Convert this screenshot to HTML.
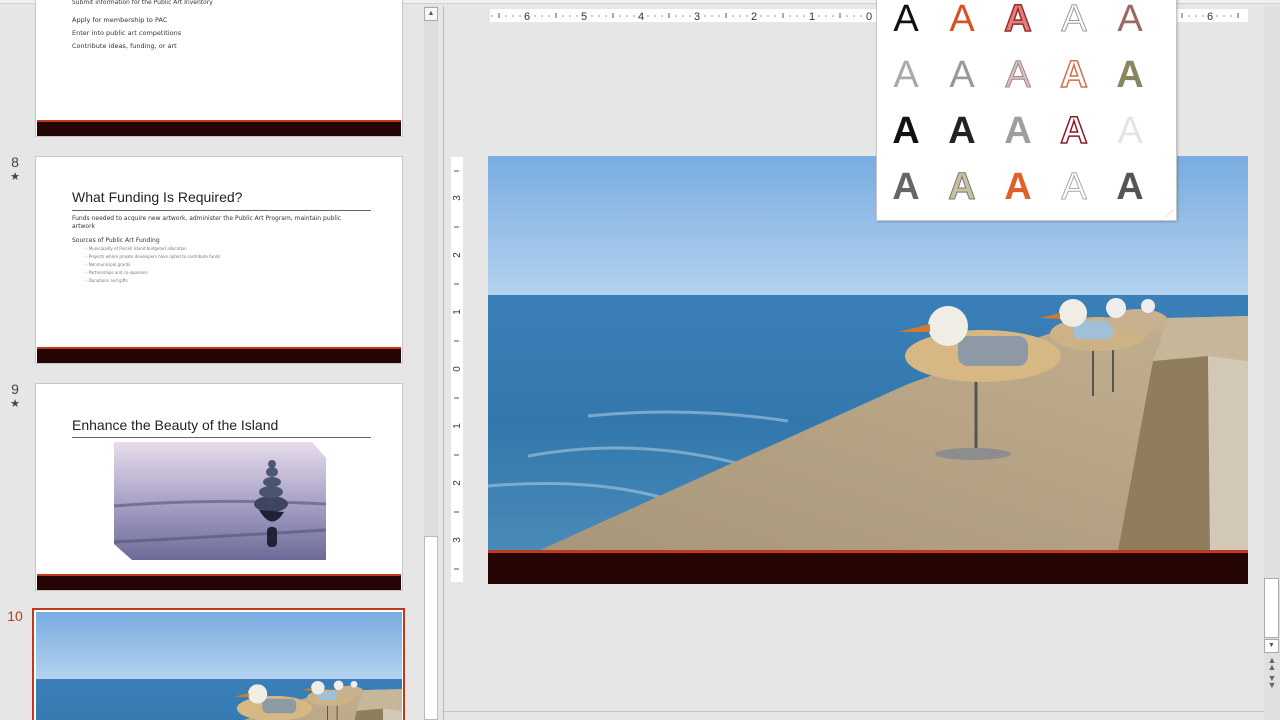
<!DOCTYPE html>
<html><head><meta charset="utf-8"><style>
*{margin:0;padding:0;box-sizing:border-box}
html,body{width:1280px;height:720px;overflow:hidden}
body{background:#e6e6e6;font-family:"Liberation Sans",sans-serif;position:relative}
.abs{position:absolute}
.slide{position:absolute;left:35px;width:368px;background:#fff;border:1px solid #c8c8c8;overflow:hidden}
.bar{position:absolute;left:1px;right:1px;height:16px;background:#250404;border-top:2px solid #c0391b}
.num{position:absolute;left:0;width:30px;text-align:center;font-size:14px;color:#444}
.t{position:absolute;font-family:"DejaVu Sans","Liberation Sans",sans-serif;color:#333}
.ga{position:absolute;width:40px;text-align:center;font-size:38px;font-family:"Liberation Sans",sans-serif;line-height:40px}
</style></head><body>
<div class="abs" style="left:0;top:0;width:1280px;height:4px;background:#f0f0f0;border-bottom:1px solid #d0d0d0"></div>

<div class="slide" style="top:-2px;height:139px">
 <div class="t" style="left:36px;top:0;font-size:6px">Submit information for the Public Art Inventory</div>
 <div class="t" style="left:36px;top:17px;font-size:6.5px">Apply for membership to PAC</div>
 <div class="t" style="left:36px;top:30px;font-size:6.5px">Enter into public art competitions</div>
 <div class="t" style="left:36px;top:43px;font-size:6.5px">Contribute ideas, funding, or art</div>
 <div class="bar" style="top:121px"></div>
</div>

<div class="num" style="top:154px">8</div><div class="num" style="top:170px;font-size:11px">★</div>
<div class="slide" style="top:156px;height:208px">
 <div class="t" style="left:36px;top:32px;font-size:14px;color:#222;font-family:'Liberation Sans',sans-serif">What Funding Is Required?</div>
 <div class="abs" style="left:36px;top:53px;width:299px;height:1px;background:#666"></div>
 <div class="t" style="left:36px;top:58px;font-size:6px;line-height:8px;width:290px">Funds needed to acquire new artwork, administer the Public Art Program, maintain public artwork</div>
 <div class="t" style="left:36px;top:80px;font-size:6px">Sources of Public Art Funding</div>
 <div class="t" style="left:50px;top:88px;font-size:4px;line-height:8px;color:#777">- Municipality of Parcell Island budgeted allocation<br>- Projects where private developers have opted to contribute funds<br>- Nonmunicipal grants<br>- Partnerships and co-sponsors<br>- Donations and gifts</div>
 <div class="bar" style="top:190px"></div>
</div>

<div class="num" style="top:381px">9</div><div class="num" style="top:397px;font-size:11px">★</div>
<div class="slide" style="top:383px;height:208px">
 <div class="t" style="left:36px;top:33px;font-size:14px;color:#222;font-family:'Liberation Sans',sans-serif">Enhance the Beauty of the Island</div>
 <div class="abs" style="left:36px;top:53px;width:299px;height:1px;background:#666"></div>
 <svg class="abs" style="left:78px;top:58px" width="212" height="118" viewBox="0 0 212 118">
  <defs><linearGradient id="st" x1="0" y1="0" x2="0" y2="1"><stop offset="0" stop-color="#e8dcea"/><stop offset=".5" stop-color="#a9a3c8"/><stop offset="1" stop-color="#6c6a96"/></linearGradient></defs>
  <polygon points="0,0 198,0 212,16 212,118 18,118 0,102" fill="url(#st)"/>
  <path d="M0,64 Q100,56 212,62" stroke="#55557a" stroke-width="3" fill="none" opacity=".6"/>
  <path d="M0,100 Q100,95 212,88" stroke="#4a4a70" stroke-width="3" fill="none" opacity=".5"/>
  <ellipse cx="157" cy="62" rx="17" ry="8" fill="#3d4560"/>
  <ellipse cx="157" cy="50" rx="12" ry="6" fill="#4a5470"/>
  <ellipse cx="158" cy="40" rx="9" ry="5" fill="#4a5470"/>
  <ellipse cx="158" cy="30" rx="6" ry="5" fill="#4e5874"/>
  <ellipse cx="158" cy="22" rx="4" ry="4" fill="#4e5874"/>
  <path d="M145,68 Q158,90 170,70 Z" fill="#1f2235"/>
  <rect x="153" y="85" width="10" height="20" rx="4" fill="#1f2235"/>
 </svg>
 <div class="bar" style="top:190px"></div>
</div>

<div class="num" style="top:608px;color:#c0391b">10</div>
<div class="abs" style="left:32px;top:608px;width:373px;height:112px;border:2px solid #c0391b;border-bottom:none;background:#fff"></div>
<svg class="abs" style="left:36px;top:612px" width="366" height="108" viewBox="0 0 760 224" preserveAspectRatio="xMidYMin slice"><use href="#photo"/></svg>

<div class="abs" style="left:424px;top:6px;width:14px;height:714px;background:#ddd"></div>
<div class="abs" style="left:424px;top:7px;width:14px;height:14px;background:#f7f7f7;border:1px solid #aaa;font-size:7px;color:#555;text-align:center;line-height:12px">▲</div>
<div class="abs" style="left:424px;top:536px;width:14px;height:184px;background:#fff;border:1px solid #bbb"></div>
<div class="abs" style="left:443px;top:6px;width:1px;height:714px;background:#bbb"></div>

<div class="abs" style="left:490px;top:9px;width:758px;height:13px;background:#fff"></div>
<svg class="abs" style="left:490px;top:9px" width="758" height="13">
 <g font-family="Liberation Sans" font-size="11" fill="#333" text-anchor="middle">
  <text x="37" y="11">6</text><text x="94" y="11">5</text><text x="151" y="11">4</text><text x="207" y="11">3</text><text x="264" y="11">2</text><text x="322" y="11">1</text><text x="379" y="11">0</text><text x="720" y="11">6</text>
 </g>
 <g stroke="#555"><path d="M9,4v5M66,4v5M123,4v5M179,4v5M236,4v5M293,4v5M350,4v5M692,4v5M748,4v5"/></g>
 <g stroke="#999"><path d="M2,6v2M16,6v2M23,6v2M30,6v2M45,6v2M52,6v2M59,6v2M73,6v2M80,6v2M87,6v2M102,6v2M109,6v2M116,6v2M130,6v2M137,6v2M144,6v2M158,6v2M165,6v2M172,6v2M186,6v2M193,6v2M200,6v2M215,6v2M222,6v2M229,6v2M243,6v2M250,6v2M257,6v2M271,6v2M278,6v2M285,6v2M300,6v2M307,6v2M314,6v2M329,6v2M336,6v2M343,6v2M357,6v2M364,6v2M371,6v2M699,6v2M706,6v2M713,6v2M727,6v2M734,6v2M741,6v2"/></g>
</svg>
<div class="abs" style="left:451px;top:157px;width:12px;height:425px;background:#fff"></div>
<svg class="abs" style="left:451px;top:157px" width="12" height="425">
 <g font-family="Liberation Sans" font-size="10" fill="#333" text-anchor="middle">
  <text transform="translate(9,41) rotate(-90)">3</text><text transform="translate(9,98) rotate(-90)">2</text><text transform="translate(9,155) rotate(-90)">1</text><text transform="translate(9,212) rotate(-90)">0</text><text transform="translate(9,269) rotate(-90)">1</text><text transform="translate(9,326) rotate(-90)">2</text><text transform="translate(9,383) rotate(-90)">3</text>
 </g>
 <g stroke="#555"><path d="M3,14h5M3,70h5M3,127h5M3,184h5M3,241h5M3,298h5M3,355h5M3,412h5"/></g>
</svg>

<svg class="abs" style="left:488px;top:156px" width="760" height="428" viewBox="0 0 760 428">
 <defs>
  <linearGradient id="sky" x1="0" y1="0" x2="0" y2="1"><stop offset="0" stop-color="#79ace0"/><stop offset="1" stop-color="#b4d2ef"/></linearGradient>
  <linearGradient id="sea" x1="0" y1="0" x2="0" y2="1"><stop offset="0" stop-color="#3b7fb8"/><stop offset=".5" stop-color="#3278ad"/><stop offset="1" stop-color="#4a8bb8"/></linearGradient>
  <linearGradient id="wall" x1="0" y1="1" x2="1" y2="0"><stop offset="0" stop-color="#a8967a"/><stop offset=".6" stop-color="#b8a586"/><stop offset="1" stop-color="#c2b091"/></linearGradient>
  <g id="photo">
   <rect width="760" height="140" fill="url(#sky)"/>
   <rect y="139" width="760" height="260" fill="url(#sea)"/>
   <path d="M40,300 Q150,280 260,310 M0,330 Q120,320 200,350 M100,260 Q200,250 300,265" stroke="#a8c8e0" stroke-width="3" fill="none" opacity=".6"/>
   <polygon points="50,395 220,318 420,228 560,178 680,162 760,160 760,395" fill="url(#wall)"/>
   <polygon points="665,205 720,200 722,395 630,395" fill="#8f7d5e"/>
   <polygon points="720,200 760,205 760,395 722,395" fill="#d2c8b5"/>
   <polygon points="680,162 760,160 760,205 720,200 665,205" fill="#c6b79a"/>
   <line x1="488" y1="222" x2="488" y2="296" stroke="#555" stroke-width="3"/>
   <ellipse cx="485" cy="298" rx="38" ry="6" fill="#8d8d8d"/>
   <ellipse cx="495" cy="200" rx="78" ry="26" fill="#d7b784"/>
   <rect x="470" y="180" width="70" height="30" rx="10" fill="#8d9aa6"/>
   <circle cx="460" cy="170" r="20" fill="#f0ede4"/>
   <polygon points="442,168 410,176 442,176" fill="#d4782f"/>
   <line x1="605" y1="190" x2="605" y2="240" stroke="#555" stroke-width="2"/>
   <line x1="625" y1="190" x2="625" y2="236" stroke="#555" stroke-width="2"/>
   <ellipse cx="610" cy="178" rx="48" ry="17" fill="#cdb286"/>
   <rect x="585" y="165" width="40" height="18" rx="6" fill="#9fc0d8"/>
   <circle cx="585" cy="157" r="14" fill="#f0ede4"/>
   <polygon points="572,157 552,162 572,163" fill="#d4782f"/>
   <ellipse cx="650" cy="165" rx="30" ry="12" fill="#c8b18e"/>
   <circle cx="628" cy="152" r="10" fill="#eee"/>
   <circle cx="660" cy="150" r="7" fill="#eee"/>
  </g>
 </defs>
 <use href="#photo"/>
 <rect y="394" width="760" height="3" fill="#c0391b"/>
 <rect y="397" width="760" height="31" fill="#250404"/>
</svg>

<div class="abs" style="left:876px;top:-2px;width:301px;height:223px;background:#fff;border:1px solid #c6c6c6;box-shadow:1px 1px 2px rgba(0,0,0,.2)">
 <div class="ga" style="left:9px;top:0;color:#111">A</div>
 <div class="ga" style="left:65px;top:0;color:#d4512a">A</div>
 <div class="ga" style="left:121px;top:0;color:#e08080;-webkit-text-stroke:1.5px #9a2a2a;font-weight:bold">A</div>
 <div class="ga" style="left:177px;top:0;color:#fff;-webkit-text-stroke:1px #999">A</div>
 <div class="ga" style="left:233px;top:0;color:#9a6a62">A</div>
 <div class="ga" style="left:9px;top:56px;color:#aaa">A</div>
 <div class="ga" style="left:65px;top:56px;color:#999">A</div>
 <div class="ga" style="left:121px;top:56px;color:#d8bfc4;-webkit-text-stroke:1px #a08888">A</div>
 <div class="ga" style="left:177px;top:56px;color:#fff;-webkit-text-stroke:1.5px #d4704a;font-weight:bold">A</div>
 <div class="ga" style="left:233px;top:56px;color:#8a8560;font-weight:bold">A</div>
 <div class="ga" style="left:9px;top:112px;color:#111;font-weight:bold">A</div>
 <div class="ga" style="left:65px;top:112px;color:#222;font-weight:bold">A</div>
 <div class="ga" style="left:121px;top:112px;color:#a09ca0;font-weight:bold">A</div>
 <div class="ga" style="left:177px;top:112px;color:#fff;-webkit-text-stroke:1.5px #8a1a28;font-weight:bold">A</div>
 <div class="ga" style="left:233px;top:112px;color:#e4e4e0">A</div>
 <div class="ga" style="left:9px;top:168px;color:#666;font-weight:bold">A</div>
 <div class="ga" style="left:65px;top:168px;color:#c8c0a0;-webkit-text-stroke:1px #777;font-weight:bold">A</div>
 <div class="ga" style="left:121px;top:168px;color:#e0602a;font-weight:bold">A</div>
 <div class="ga" style="left:177px;top:168px;color:#fff;-webkit-text-stroke:1px #aaa">A</div>
 <div class="ga" style="left:233px;top:168px;color:#555;font-weight:bold">A</div>
 <div class="abs" style="right:3px;bottom:2px;font-size:7px;color:#999">⋰</div>
</div>

<div class="abs" style="left:1264px;top:6px;width:16px;height:714px;background:#e0e0e0"></div>
<div class="abs" style="left:1264px;top:578px;width:15px;height:60px;background:#fff;border:1px solid #aaa"></div>
<div class="abs" style="left:1264px;top:639px;width:15px;height:14px;background:#fff;border:1px solid #aaa;font-size:7px;color:#555;text-align:center;line-height:12px">▼</div>
<div class="abs" style="left:1265px;top:657px;width:14px;font-size:9px;color:#666;text-align:center;line-height:7px">▲<br>▲</div>
<div class="abs" style="left:1265px;top:675px;width:14px;font-size:9px;color:#666;text-align:center;line-height:7px">▼<br>▼</div>
<div class="abs" style="left:444px;top:711px;width:820px;height:1px;background:#c8c8c8"></div>
</body></html>
